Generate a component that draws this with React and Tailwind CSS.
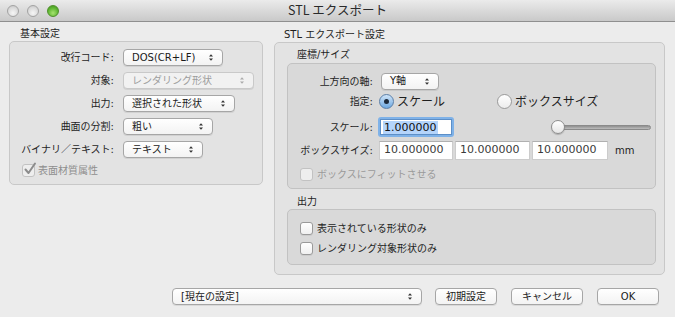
import React from "react";

const FONT = { fontFamily: "'DejaVu Sans','Noto Sans CJK JP',sans-serif" };

function Arrows({ color = "#333" }) {
  return (
    <svg width="6" height="9" viewBox="0 0 6 9" className="shrink-0">
      <path d="M1 3.5 L3 1.2 L5 3.5 Z" fill={color} />
      <path d="M1 5.5 L3 7.8 L5 5.5 Z" fill={color} />
    </svg>
  );
}

function Popup({ w, children, disabled }) {
  return (
    <div
      className={
        "h-[17px] rounded-[4px] border flex items-center justify-between pl-[8px] pr-[8px] shadow-[0_1px_0_rgba(0,0,0,0.08)] " +
        (disabled
          ? "border-[#c9c9c9] bg-[#f1f1f1] text-[#9c9c9c]"
          : "border-[#a6a6a6] bg-gradient-to-b from-[#ffffff] to-[#f3f3f3] text-[#1a1a1a]")
      }
      style={{ width: w }}
    >
      <span className="leading-none whitespace-nowrap">{children}</span>
      <Arrows color={disabled ? "#aaa" : "#333"} />
    </div>
  );
}

function Checkbox({ checked, disabled }) {
  return (
    <div className="relative w-[13px] h-[13px] shrink-0">
      <div
        className={
          "w-[13px] h-[13px] rounded-[3px] border " +
          (disabled
            ? "border-[#c2c2c2] bg-[#eeeeee]"
            : "border-[#9a9a9a] bg-gradient-to-b from-[#ffffff] to-[#f0f0f0] shadow-[0_1px_0_rgba(0,0,0,0.06)]")
        }
      />
      {checked && (
        <svg
          width="14"
          height="14"
          viewBox="0 0 14 14"
          className="absolute left-[1px] top-[-2px]"
        >
          <path
            d="M2.5 7.5 L5.5 11 L12 1.5"
            fill="none"
            stroke="#8c8c8c"
            strokeWidth="2"
            strokeLinecap="round"
            strokeLinejoin="round"
          />
        </svg>
      )}
    </div>
  );
}

function Radio({ selected }) {
  return selected ? (
    <div className="w-[15px] h-[15px] rounded-full border border-[#5b7fa8] bg-gradient-to-b from-[#cfe4f8] to-[#6ea9e0] flex items-center justify-center shrink-0">
      <div className="w-[5px] h-[5px] rounded-full bg-[#1d2a3a]" />
    </div>
  ) : (
    <div className="w-[15px] h-[15px] rounded-full border border-[#9a9a9a] bg-gradient-to-b from-[#ffffff] to-[#ececec] shrink-0" />
  );
}

function Button({ w, children }) {
  return (
    <div
      className="h-[17px] rounded-[4px] border border-[#a6a6a6] bg-gradient-to-b from-[#ffffff] to-[#f3f3f3] flex items-center justify-center shadow-[0_1px_0_rgba(0,0,0,0.08)] text-[#1a1a1a]"
      style={{ width: w }}
    >
      <span className="leading-none">{children}</span>
    </div>
  );
}

function TrafficLight({ green }) {
  return green ? (
    <div className="w-[12px] h-[12px] rounded-full border border-[#4f8f2a] bg-[radial-gradient(circle_at_50%_70%,#a6e36f,#5db531_60%,#3f8f1c)]" />
  ) : (
    <div className="w-[12px] h-[12px] rounded-full border border-[#a3a3a3] bg-[radial-gradient(circle_at_50%_70%,#f6f6f6,#dadada_60%,#c2c2c2)]" />
  );
}

function LeftRow({ label, children }) {
  return (
    <div className="flex items-center h-[17px]">
      <div className="w-[105px] text-right pr-[1px] whitespace-nowrap">{label}</div>
      <div className="ml-[8px]">{children}</div>
    </div>
  );
}

function RightRow({ label, children, h = 17 }) {
  return (
    <div className="flex items-center" style={{ height: h }}>
      <div className="w-[85px] text-right whitespace-nowrap">{label}</div>
      <div className="ml-[6px] flex items-center">{children}</div>
    </div>
  );
}

function Field({ children, w }) {
  return (
    <div
      className="h-[19px] bg-white border border-[#cccccc] border-t-[#b0b0b0] flex items-center pl-[4px] text-[#3a3a3a] text-[11px]"
      style={{ width: w }}
    >
      {children}
    </div>
  );
}

export default function App() {
  return (
    <div
      className="w-[675px] h-[317px] bg-[#ececec] flex flex-col overflow-hidden text-[10px] text-[#1e1e1e]"
      style={FONT}
    >
      {/* Title bar */}
      <div className="h-[22px] shrink-0 bg-gradient-to-b from-[#ebebeb] to-[#c9c9c9] border-b border-[#8f8f8f] flex items-center relative">
        <div className="flex items-center gap-[8px] ml-[7px]">
          <TrafficLight />
          <TrafficLight />
          <TrafficLight green />
        </div>
        <div
          className="absolute left-0 right-0 top-0 h-[21px] flex items-center justify-center text-[12.5px] text-[#2a2a2a]"
          style={{ fontFamily: "'Noto Sans CJK JP',sans-serif" }}
        >
          STL エクスポート
        </div>
      </div>

      {/* Body */}
      <div className="flex items-start">
        {/* Left column */}
        <div className="ml-[9px] w-[254px] pt-[4px]">
          <div className="h-[15px] leading-[15px] pl-[11px]">基本設定</div>
          <div className="h-[144px] rounded-[5px] border border-[#c8c8c8] bg-[#e3e3e3] pt-[7px] flex flex-col gap-[6px]">
            <LeftRow label="改行コード:">
              <Popup w={100}>DOS(CR+LF)</Popup>
            </LeftRow>
            <LeftRow label="対象:">
              <Popup w={131} disabled>レンダリング形状</Popup>
            </LeftRow>
            <LeftRow label="出力:">
              <Popup w={112}>選択された形状</Popup>
            </LeftRow>
            <LeftRow label="曲面の分割:">
              <Popup w={90}>粗い</Popup>
            </LeftRow>
            <LeftRow label="バイナリ／テキスト:">
              <Popup w={80}>テキスト</Popup>
            </LeftRow>
            <div className="flex items-center gap-[3px] pl-[12px] mt-[-1px] h-[14px] text-[#8e8e8e]">
              <Checkbox checked disabled />
              <span>表面材質属性</span>
            </div>
          </div>
        </div>

        {/* Right column */}
        <div className="ml-[11px] w-[391px] pt-[5px]">
          <div className="h-[15px] leading-[15px] pl-[10px]">STL エクスポート設定</div>
          <div className="h-[233px] rounded-[5px] border border-[#c8c8c8] bg-[#e3e3e3] pl-[12px] pr-[8px] pt-[4px]">
            <div className="h-[16px] leading-[16px] pl-[10px]">座標/サイズ</div>
            <div className="h-[126px] rounded-[5px] border border-[#c2c2c2] bg-[#d9d9d9] pt-[9px] flex flex-col">
              <RightRow label="上方向の軸:" h={16}>
                <div className="ml-[2px]">
                  <Popup w={58}>Y軸</Popup>
                </div>
              </RightRow>
              <RightRow label="指定:" h={24}>
                <div className="flex items-center mt-[1px]">
                  <Radio selected />
                  <span className="ml-[3px] text-[12px] w-[100px]">スケール</span>
                  <Radio />
                  <span className="ml-[3px] text-[12px]">ボックスサイズ</span>
                </div>
              </RightRow>
              <div className="h-[4px]" />
              <RightRow label="スケール:" h={20}>
                <div className="w-[76px] h-[20px] rounded-[3px] bg-[#7fb2e8] p-[2px] -ml-[1px]">
                  <div className="w-full h-full bg-white border border-[#5d8fc7] flex items-center pl-[2px] text-[11px]">
                    <span className="bg-[#b4d4fb] leading-[13px] px-[1px] text-[#111]">1.000000</span>
                  </div>
                </div>
                <div className="ml-[98px] relative w-[99px] h-[14px] flex items-center">
                  <div className="w-full h-[5px] rounded-full bg-gradient-to-b from-[#8f8f8f] to-[#bdbdbd] border border-[#8a8a8a]" />
                  <div className="absolute left-[-1px] top-[0px] w-[14px] h-[14px] rounded-full border border-[#8d8d8d] bg-gradient-to-b from-[#ffffff] to-[#e6e6e6] shadow-[0_1px_1px_rgba(0,0,0,0.2)]" />
                </div>
              </RightRow>
              <div className="h-[4px]" />
              <RightRow label="ボックスサイズ:" h={19}>
                <div className="flex items-center gap-[2px]">
                  <Field w={74}>10.000000</Field>
                  <Field w={75}>10.000000</Field>
                  <Field w={76}>10.000000</Field>
                  <span className="ml-[5px] text-[10px]">mm</span>
                </div>
              </RightRow>
              <div className="flex items-center gap-[4px] pl-[12px] mt-[8px] h-[13px] text-[#9a9a9a]">
                <Checkbox disabled />
                <span>ボックスにフィットさせる</span>
              </div>
            </div>
            <div className="h-[20px] leading-[16px] pl-[10px] pt-[5px]">出力</div>
            <div className="h-[56px] rounded-[5px] border border-[#c2c2c2] bg-[#d9d9d9] pt-[12px] pl-[12px] flex flex-col gap-[7px]">
              <div className="flex items-center gap-[4px] h-[13px]">
                <Checkbox />
                <span>表示されている形状のみ</span>
              </div>
              <div className="flex items-center gap-[4px] h-[13px]">
                <Checkbox />
                <span>レンダリング対象形状のみ</span>
              </div>
            </div>
          </div>
        </div>
      </div>

      {/* Bottom bar */}
      <div className="flex items-center mt-[13px] ml-[172px]">
        <Popup w={250}>[現在の設定]</Popup>
        <div className="ml-[13px]">
          <Button w={62}>初期設定</Button>
        </div>
        <div className="ml-[14px]">
          <Button w={72}>キャンセル</Button>
        </div>
        <div className="ml-[14px]">
          <Button w={62}>OK</Button>
        </div>
      </div>
    </div>
  );
}
